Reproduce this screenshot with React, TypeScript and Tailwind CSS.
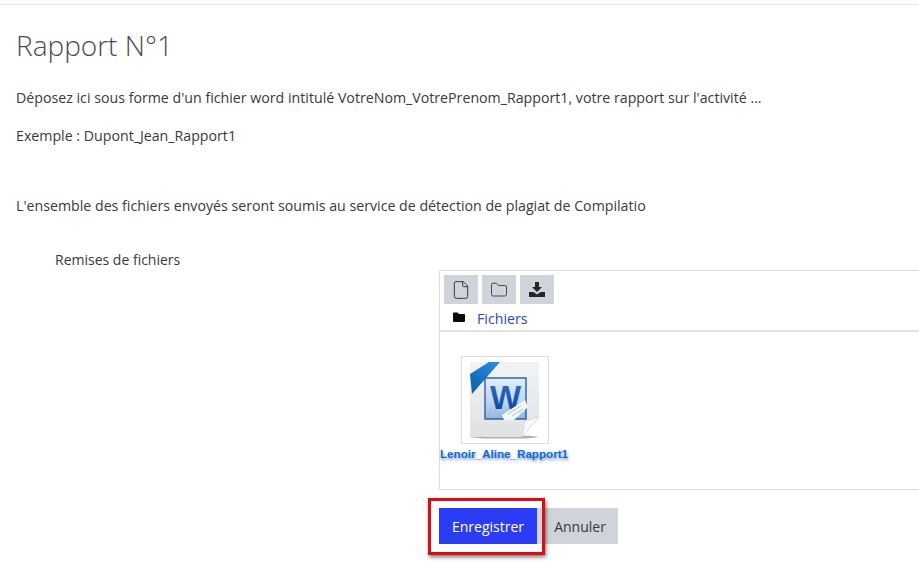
import { File, Folder } from "lucide-react"

function WordIcon() {
  return (
    <svg width="86" height="86" viewBox="0 0 86 86">
      <defs>
        <linearGradient id="page" x1="0" y1="0" x2="0" y2="1">
          <stop offset="0" stopColor="#f2f3f4" />
          <stop offset="1" stopColor="#dfe1e3" />
        </linearGradient>
        <linearGradient id="doc" x1="0" y1="0" x2="0" y2="1">
          <stop offset="0" stopColor="#e3eef9" />
          <stop offset="0.6" stopColor="#bcd5ef" />
          <stop offset="1" stopColor="#8fb5dd" />
        </linearGradient>
        <linearGradient id="ribbon" x1="0" y1="1" x2="1" y2="0">
          <stop offset="0" stopColor="#0b5cab" />
          <stop offset="1" stopColor="#2f8fe0" />
        </linearGradient>
        <linearGradient id="wfill" x1="0" y1="0" x2="0" y2="1">
          <stop offset="0" stopColor="#2f74c8" />
          <stop offset="1" stopColor="#0c3f94" />
        </linearGradient>
      </defs>
      <ellipse cx="42" cy="80" rx="34" ry="1.6" fill="#aeaeae" />
      <path d="M8 5H77V60L60 80H8Z" fill="url(#page)" />
      <path d="M60 80L63 64L77 60Z" fill="#f8f8f8" stroke="#c4c4c4" strokeWidth="0.5" />
      <path d="M8 17L27 5H38L10 37Z" fill="url(#ribbon)" />
      <rect x="23" y="21" width="41" height="41" fill="url(#doc)" stroke="#2a5f9e" strokeWidth="1.4" />
      <text x="28" y="52" fontFamily="Liberation Sans, sans-serif" fontWeight="700" fontSize="33" fill="url(#wfill)">
        W
      </text>
      <path d="M40 58L63 43L66 50L52 63H42Z" fill="#f3f6fa" />
      <path d="M46 57L59 49M50 59L61 52" stroke="#9aa8b8" strokeWidth="0.7" />
    </svg>
  )
}

function ImportIcon() {
  return (
    <svg width="16" height="15" viewBox="0 0 16 15" fill="#22262a">
      <path d="M6 0H10V5H13L8 10L3 5H6Z" />
      <path d="M0 10H4.5L8 12.5L11.5 10H16V15H0Z" />
    </svg>
  )
}

export default function App() {
  return (
    <div className="h-[571px] overflow-hidden bg-white font-['Open_Sans',sans-serif] text-[14.2px] text-[#373a3c]">
      <div className="mt-1 border-t border-[#e3e3e3] pl-4">
        {/* Heading */}
        <h2 className="pt-[23px] text-[28px] leading-[34px] font-light text-[#4a4d50]">Rapport N°1</h2>

        {/* Intro */}
        <p className="mt-[26px] leading-5 whitespace-nowrap">
          Déposez ici sous forme d'un fichier word intitulé VotreNom_VotrePrenom_Rapport1, votre rapport sur l'activité ...
        </p>
        <p className="mt-[18px] leading-5">Exemple : Dupont_Jean_Rapport1</p>
        <p className="mt-[50px] leading-5 whitespace-nowrap">
          L'ensemble des fichiers envoyés seront soumis au service de détection de plagiat de Compilatio
        </p>

        <p className="mt-[34px] pl-[39px] text-[14px] leading-5">Remises de fichiers</p>
      </div>

      {/* File manager */}
      <div className="ml-[439px] h-[220px] border border-r-0 border-[#dedede]">
        <div className="flex gap-[4px] pt-[4px] pl-[4px]">
          <button className="flex h-[29px] w-[34px] items-center justify-center bg-[#ced4da]">
            <File size={20} strokeWidth={1.2} className="text-[#343a40]" />
          </button>
          <button className="flex h-[29px] w-[34px] items-center justify-center bg-[#ced4da]">
            <Folder size={18} strokeWidth={1.2} className="text-[#343a40]" />
          </button>
          <button className="flex h-[29px] w-[34px] items-center justify-center bg-[#ced4da]">
            <ImportIcon />
          </button>
        </div>
        <div className="flex h-[28px] items-center border-b-2 border-[#e3e3e3] pl-[13px]">
          <svg className="-mt-[1px]" width="12" height="10" viewBox="0 0 12 10">
            <path d="M0 1.5A1 1 0 0 1 1 .5H4.5L6 2H11A1 1 0 0 1 12 3V9A1 1 0 0 1 11 10H1A1 1 0 0 1 0 9Z" fill="#0a0a0a" />
          </svg>
          <a className="ml-[12px] pt-[4px] text-[#2a46c8]">Fichiers</a>
        </div>
        <div className="pt-[24px]">
          <div className="ml-[21px] h-[88px] w-[88px] border border-[#dedede]">
            <WordIcon />
          </div>
          <div className="mt-[2px] font-['Liberation_Sans',sans-serif] text-[11.65px] leading-[15px] font-bold text-[#0f6cd6] [text-shadow:1px_2px_3px_rgba(0,60,140,0.55)]">
            Lenoir_Aline_Rapport1
          </div>
        </div>
      </div>

      {/* Actions */}
      <div className="mt-[18px] ml-[439px] flex text-[14px]">
        <div className="relative flex h-9 w-[98px] items-center justify-center bg-[#2b3cf5] text-white">
          Enregistrer
          <div className="absolute -top-[10px] -right-[8px] -bottom-[11px] -left-[11px] border-[3px] border-[#e00b12] shadow-[1px_2px_4px_rgba(0,0,0,0.55)]" />
        </div>
        <div className="flex h-9 w-[81px] items-center justify-center pl-[5px] bg-[#ced4da]">Annuler</div>
      </div>
    </div>
  )
}
